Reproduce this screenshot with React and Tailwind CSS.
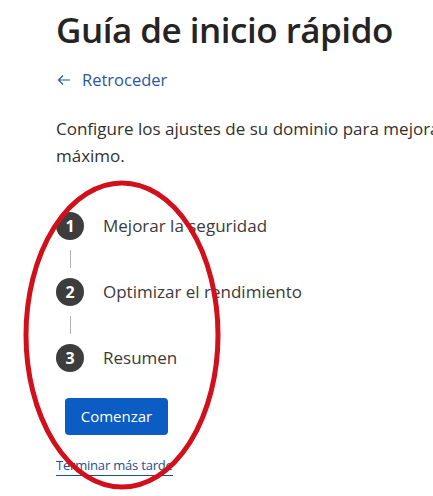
import React from 'react';

// Guía de inicio rápido - pasos
const steps = ['Mejorar la seguridad', 'Optimizar el rendimiento', 'Resumen'];

const StepCircle = ({ n }) => (
  <div className="w-7 h-7 rounded-full bg-[#3d3d3d] text-white flex items-center justify-center text-[16px] font-bold">
    {n}
  </div>
);

export default function App() {
  return (
    <div
      className="relative w-[433px] h-[496px] overflow-hidden bg-white text-[#323130]"
      style={{ fontFamily: '"Open Sans", "Noto Sans", sans-serif' }}
    >
      <div className="pl-[56px] pt-[6px]">
        <h1 className="text-[35px] leading-[48px] font-semibold tracking-[-0.5px] text-[#252423] whitespace-nowrap">
          Guía de inicio rápido
        </h1>

        <a className="mt-[14px] flex items-center gap-[10px] text-[#2b579a] text-[16.5px] leading-[24px]">
          <svg width="16" height="16" viewBox="0 0 16 16" fill="none" stroke="currentColor" strokeWidth="1.2">
            <path d="M14 8H2.5M7 3.5L2.5 8L7 12.5" />
          </svg>
          <span>Retroceder</span>
        </a>

        <p className="mt-[23px] whitespace-nowrap text-[17px] leading-[27px] text-[#323130]">
          Configure los ajustes de su dominio para mejorar la seguridad y el rendimiento al
          <br />
          máximo.
        </p>

        <div className="mt-[43px] flex flex-col">
          {steps.map((s, i) => (
            <div key={s} className="flex flex-col">
              <div className="flex items-center">
                <StepCircle n={i + 1} />
                <span className="ml-[19px] text-[17px] text-[#3b3a39]">{s}</span>
              </div>
              {i < steps.length - 1 && (
                <div className="ml-[13.5px] w-px h-[18px] bg-[#b3b0ad] my-[10px]" />
              )}
            </div>
          ))}
        </div>

        <button className="ml-[9px] mt-[26px] w-[103px] h-[37px] rounded-[4px] bg-[#0b5cc3] text-white text-[15px]">
          Comenzar
        </button>

        <div className="mt-[17px]">
          <a className="text-[13px] tracking-[-0.2px] text-[#1e4e8c] border-b border-[#1e4e8c] pb-[1px]">
            Terminar más tarde
          </a>
        </div>
      </div>

      {/* anotación roja */}
      <svg className="absolute left-0 top-0 pointer-events-none" width="433" height="496">
        <ellipse cx="122" cy="335" rx="96" ry="152" fill="none" stroke="#d2101c" strokeWidth="5" />
      </svg>
    </div>
  );
}
